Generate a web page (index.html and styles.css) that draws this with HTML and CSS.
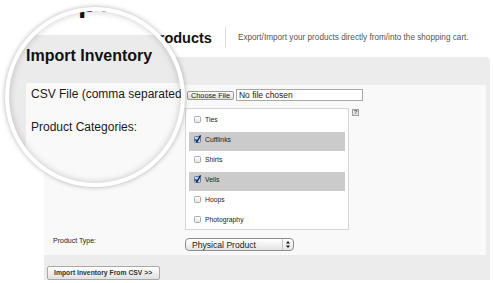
FILE: index.html
```html
<!DOCTYPE html>
<html lang="en">
<head>
<meta charset="utf-8">
<title>Import Inventory</title>
<link rel="stylesheet" href="styles.css">
</head>
<body>
<div class="page">
  <header class="head">
    <h1 class="title">Import/Export Products</h1>
    <span class="sep"></span>
    <p class="sub">Export/Import your products directly from/into the shopping cart.</p>
  </header>
  <section class="panel">
    <h2 class="panel-title">Import Inventory</h2>
    <div class="form">
      <div class="row row-file">
        <span class="label">CSV File (comma separated values):</span>
        <div class="file">
          <span class="file-btn">Choose File</span>
          <span class="file-name">No file chosen</span>
        </div>
      </div>
      <div class="row row-cats">
        <span class="label">Product Categories:</span>
        <div class="cats">
          <ul class="list">
            <li class="item"><span class="cb"></span>Ties</li>
            <li class="item on"><svg class="cb-on" width="7" height="7" viewBox="0 0 7 7" overflow="visible"><rect x=".5" y=".5" width="6" height="6" rx="1" fill="#bfd4ee" stroke="#5a7cae"/><path d="M1.4 3.4 L3 5.6 L6.6 -0.6" fill="none" stroke="#13264d" stroke-width="1.4"/></svg>Cufflinks</li>
            <li class="item"><span class="cb"></span>Shirts</li>
            <li class="item on"><svg class="cb-on" width="7" height="7" viewBox="0 0 7 7" overflow="visible"><rect x=".5" y=".5" width="6" height="6" rx="1" fill="#bfd4ee" stroke="#5a7cae"/><path d="M1.4 3.4 L3 5.6 L6.6 -0.6" fill="none" stroke="#13264d" stroke-width="1.4"/></svg>Veils</li>
            <li class="item"><span class="cb"></span>Hoops</li>
            <li class="item"><span class="cb"></span>Photography</li>
          </ul>
          <span class="help">?</span>
        </div>
      </div>
      <div class="row row-type">
        <span class="label type-label">Product Type:</span>
        <div class="select">
          <span class="select-text">Physical Product</span>
          <span class="select-arrows"><svg width="4" height="7" viewBox="0 0 4 7"><path d="M2 0 L4 2.6 L0 2.6 Z M2 7 L4 4.4 L0 4.4 Z" fill="#111"/></svg></span>
        </div>
      </div>
    </div>
    <div class="actions">
      <span class="btn-import">Import Inventory From CSV &gt;&gt;</span>
    </div>
  </section>
  <div class="mag">
    <div class="mag-top"><span class="mag-heading">Import/Export Products</span></div>
    <div class="mag-band">
      <h3 class="mag-title">Import Inventory</h3>
      <div class="mag-panel">
        <p class="mag-label">CSV File (comma separated values):</p>
        <p class="mag-label">Product Categories:</p>
      </div>
    </div>
  </div>
</div>
</body>
</html>
```

FILE: styles.css
```css
* { box-sizing: border-box; margin: 0; padding: 0; }
body { margin: 0; background: #fff; font-family: "Liberation Sans", Arial, Helvetica, sans-serif; color: #222; }
.page { position: relative; width: 493px; height: 283px; padding: 27px 3px 0 44px; overflow: hidden; }

.head { display: flex; align-items: center; height: 21px; margin-bottom: 9px; }
.title { font-size: 14.5px; font-weight: bold; color: #111; margin-left: 6px; margin-right: 13px; white-space: nowrap; }
.sep { width: 1px; align-self: stretch; background: #dcdcdc; margin-right: 12px; }
.sub { font-size: 8.2px; color: #555; white-space: nowrap; }

.panel { background: #ececec; border-radius: 0 4px 0 0; padding-right: 4px; height: 223px; display: flex; flex-direction: column; }
.panel-title { height: 30px; font-size: 9px; font-weight: bold; padding: 10px 0 0 8px; color: #111; }
.form { background: #f9f9f9; height: 170px; padding: 4px 0 4px 9px; display: flex; flex-direction: column; }
.row { display: grid; grid-template-columns: 132px 1fr; align-items: start; }
.row-file { margin-bottom: 7px; align-items: center; }
.row-cats { margin-bottom: 8px; }
.label { font-size: 7px; line-height: 9px; color: #222; white-space: nowrap; }
.type-label { margin-top: -2px; }

.file { display: flex; align-items: center; height: 12px; }
.file-btn { height: 9px; margin-left: 2px; padding: 0 3px; font-size: 7.3px; line-height: 7px; color: #222; border: 1px solid #9a9a9a; border-radius: 2px; background: linear-gradient(#fdfdfd, #dadada); white-space: nowrap; }
.file-name { margin-left: 2px; width: 127px; height: 12px; border: 1px solid #a8a8a8; background: #fff; font-size: 8.5px; line-height: 10px; padding-left: 2px; color: #222; white-space: nowrap; }

.cats { display: flex; align-items: flex-start; }
.list { list-style: none; width: 164px; height: 122px; border: 1px solid #d6d6d6; background: #fff; padding: 3px 3px 0; overflow: hidden; }
.item { display: flex; align-items: center; gap: 4px; height: 19px; margin-bottom: 1px; padding: 0 0 4px 5px; font-size: 6.8px; color: #222; }
.item.on { background: #cbcbcb; }
.cb { flex: none; width: 7px; height: 7px; border: 1px solid #a9a9a9; border-radius: 1.5px; background: linear-gradient(#fff, #e6e6e6); }
.cb-on { flex: none; display: block; }
.help { margin-left: 3px; margin-top: 1px; width: 7px; height: 7px; border: 1px solid #a0a0a0; background: #e6e6e6; font-size: 6px; line-height: 5px; text-align: center; font-weight: bold; color: #555; }

.select { display: flex; align-items: center; width: 109px; height: 13px; border: 1px solid #8e8e8e; border-radius: 4px; background: linear-gradient(#fff, #e4e4e4); padding-left: 6px; }
.select-text { flex: 1; font-size: 8.6px; color: #1a1a1a; white-space: nowrap; }
.select-arrows { width: 11px; height: 100%; border-left: 1px solid #c4c4c4; display: flex; align-items: center; justify-content: center; }

.actions { padding: 6px 0 0 3px; }
.btn-import { display: inline-block; width: 113px; height: 14px; padding-left: 6px; font-size: 6.8px; line-height: 12px; font-weight: bold; color: #333; border: 1px solid #a9a9a9; border-radius: 2px; background: linear-gradient(#fff, #e0e0e0); white-space: nowrap; }

.mag { position: absolute; left: 5px; top: 7px; width: 180px; height: 180px; border-radius: 50%; border: 4px solid #fff; overflow: hidden; background: #ebebeb; box-shadow: 0 0 5px rgba(0, 0, 0, 0.3); }
.mag::after { content: ""; position: absolute; inset: 0; border-radius: 50%; box-shadow: inset 0 0 7px rgba(0, 0, 0, 0.22); }
.mag-top { display: flow-root; height: 24px; background: #fff; }
.mag-heading { display: block; margin: -24px 0 0 34px; font-size: 30px; line-height: 30px; font-weight: bold; color: #111; white-space: nowrap; }
.mag-band { padding-left: 17px; }
.mag-title { margin: 11px 0 17px; font-size: 16px; line-height: 20px; font-weight: bold; color: #111; white-space: nowrap; }
.mag-panel { background: #f9f9f9; height: 130px; padding: 4px 0 0 5px; }
.mag-label { font-size: 12px; line-height: 14px; color: #1a1a1a; white-space: nowrap; }
.mag-label + .mag-label { margin-top: 19px; }
```
